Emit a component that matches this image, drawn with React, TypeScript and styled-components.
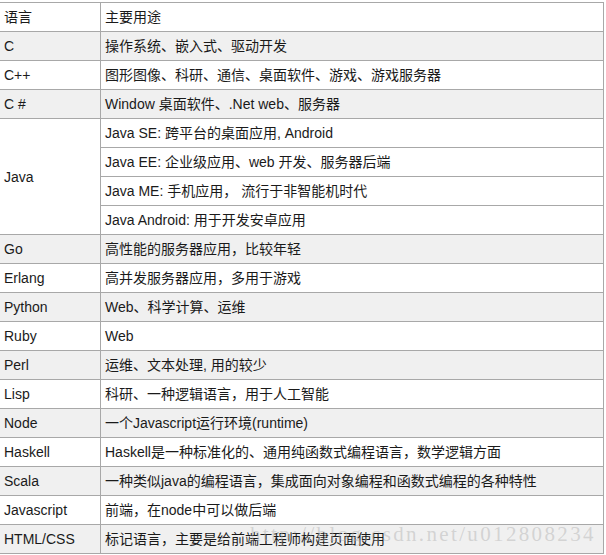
import React from "react";
import styled, { createGlobalStyle } from "styled-components";

const Global = createGlobalStyle`
  html, body { margin: 0; padding: 0; background: #fff; }
  body { font-family: "Liberation Sans", "Noto Sans CJK SC", sans-serif; }
`;

const Page = styled.div`
  position: relative;
  width: 606px;
  height: 555px;
  overflow: hidden;
  background: #fff;
`;

const Table = styled.div`
  margin-top: 2px;
  width: 604px;
  display: grid;
  grid-template-columns: 101px 503px;
  grid-auto-rows: 29px;
  border-top: 1px solid #a8a8a8;
`;

const Cell = styled.div<{ $shade?: boolean; $span?: number }>`
  box-sizing: border-box;
  display: flex;
  align-items: center;
  padding: 0 0 0 4px;
  border-right: 1px solid #a8a8a8;
  border-bottom: 1px solid #a8a8a8;
  background: ${(p) => (p.$shade ? "#f0f0f0" : "#ffffff")};
  color: #1a1a1a;
  font-size: 14px;
  line-height: 16px;
  white-space: nowrap;
  ${(p) => (p.$span ? `grid-row: span ${p.$span};` : "")}
`;

const Watermark = styled.div`
  position: absolute;
  left: 250px;
  top: 522px;
  font-family: "Liberation Serif", serif;
  font-size: 21px;
  letter-spacing: 2.35px;
  color: rgba(175, 175, 175, 0.45);
  white-space: nowrap;
  pointer-events: none;
`;

type Row = { lang?: string; desc: string; shade: boolean; span?: number };

const rows: Row[] = [
  { lang: "语言", desc: "主要用途", shade: false },
  { lang: "C", desc: "操作系统、嵌入式、驱动开发", shade: true },
  { lang: "C++", desc: "图形图像、科研、通信、桌面软件、游戏、游戏服务器", shade: false },
  { lang: "C #", desc: "Window 桌面软件、.Net web、服务器", shade: true },
  { lang: "Java", desc: "Java SE: 跨平台的桌面应用, Android", shade: false, span: 4 },
  { desc: "Java EE: 企业级应用、web 开发、服务器后端", shade: false },
  { desc: "Java ME: 手机应用， 流行于非智能机时代", shade: false },
  { desc: "Java Android: 用于开发安卓应用", shade: false },
  { lang: "Go", desc: "高性能的服务器应用，比较年轻", shade: true },
  { lang: "Erlang", desc: "高并发服务器应用，多用于游戏", shade: false },
  { lang: "Python", desc: "Web、科学计算、运维", shade: true },
  { lang: "Ruby", desc: "Web", shade: false },
  { lang: "Perl", desc: "运维、文本处理, 用的较少", shade: true },
  { lang: "Lisp", desc: "科研、一种逻辑语言，用于人工智能", shade: false },
  { lang: "Node", desc: "一个Javascript运行环境(runtime)", shade: true },
  { lang: "Haskell", desc: "Haskell是一种标准化的、通用纯函数式编程语言，数学逻辑方面", shade: false },
  { lang: "Scala", desc: "一种类似java的编程语言，集成面向对象编程和函数式编程的各种特性", shade: true },
  { lang: "Javascript", desc: "前端，在node中可以做后端", shade: false },
  { lang: "HTML/CSS", desc: "标记语言，主要是给前端工程师构建页面使用", shade: true },
];

export default function App() {
  return (
    <Page>
      <Global />
      <Table>
        {rows.map((r, i) => (
          <React.Fragment key={i}>
            {r.lang !== undefined && (
              <Cell $shade={r.shade} $span={r.span}>
                {r.lang}
              </Cell>
            )}
            <Cell $shade={r.shade}>{r.desc}</Cell>
          </React.Fragment>
        ))}
      </Table>
      <Watermark>http://blog.csdn.net/u012808234</Watermark>
    </Page>
  );
}
